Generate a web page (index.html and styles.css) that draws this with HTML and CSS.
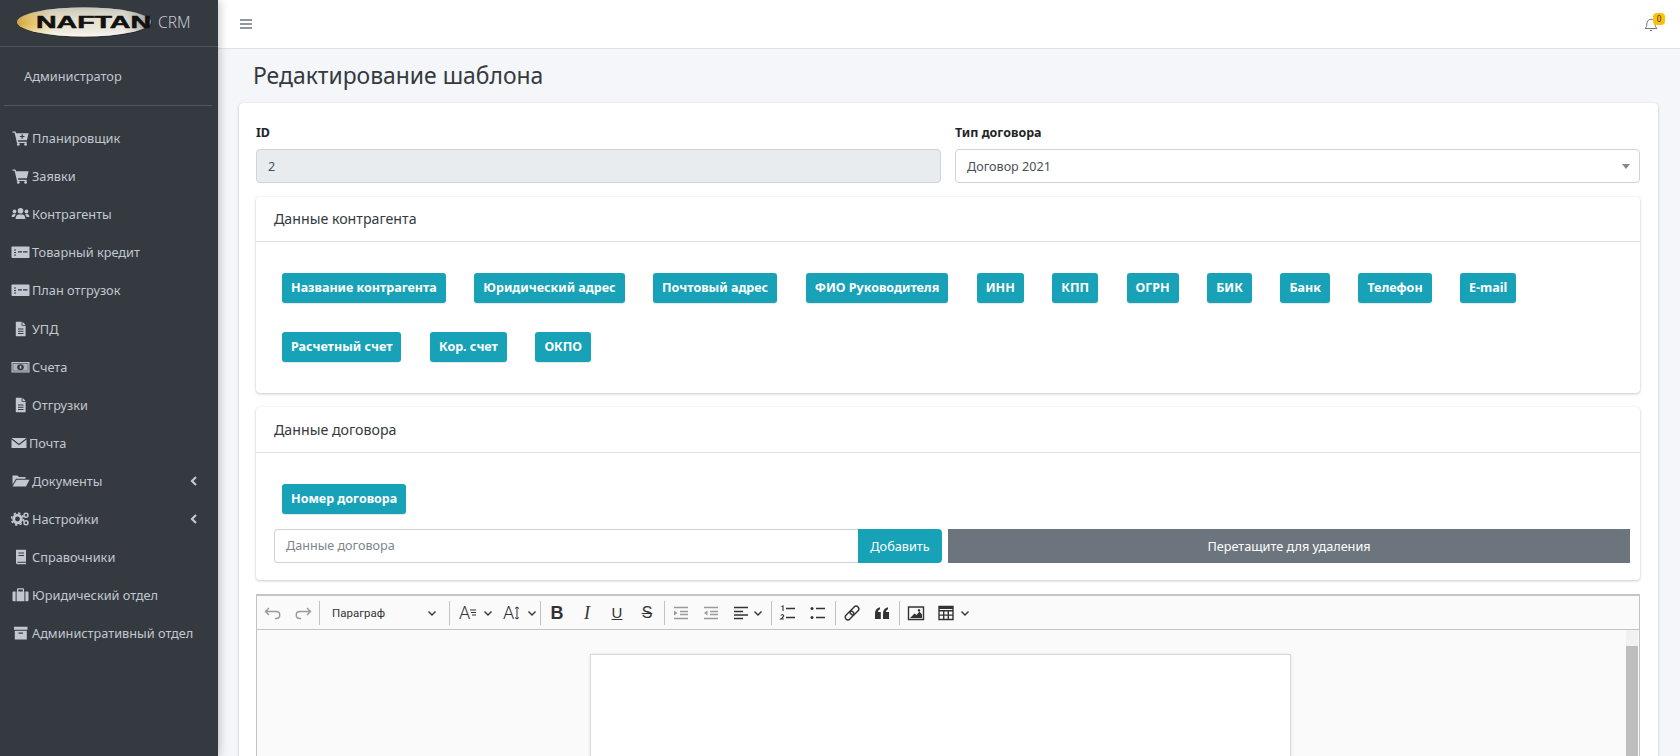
FILE: index.html
```html
<!DOCTYPE html>
<html lang="en">
<head>
    <meta charset="UTF-8">
    <meta name="viewport" content="width=device-width, initial-scale=1.0">
    <title>Редактирование шаблона</title>
    <link rel="stylesheet" href="styles.css">
</head>
<body>
    <svg class="icon-defs" xmlns="http://www.w3.org/2000/svg">
        <symbol id="i-cart" viewBox="0 0 19 16"><path d="M1.500 1.500h3l.6 1.800H17.600l-1.700 7H7l.3 1.400h8.400v1.200H6L3.600 2.800H1.500z"/><circle cx="7.300" cy="14.400" r="1.400"/><circle cx="14.600" cy="14.400" r="1.400"/></symbol>
        <symbol id="i-cart-plus" viewBox="0 0 19 16"><path d="M1.500 1.500h3l.6 1.800H17.600l-1.700 7H7l.3 1.400h8.400v1.200H6L3.600 2.800H1.500z"/><circle cx="7.300" cy="14.400" r="1.400"/><circle cx="14.600" cy="14.400" r="1.400"/><path class="cut" d="M10.600 4.200h1.200v1.700h1.700v1.200h-1.700v1.700h-1.200V7.100H8.900V5.900h1.700z"/></symbol>
        <symbol id="i-users" viewBox="0 0 19 16"><circle cx="3.500" cy="5.500" r="1.900"/><circle cx="15.500" cy="5.500" r="1.900"/><circle cx="9.500" cy="4.800" r="2.800"/><path d="M.6 11c0-2 1-3 2.600-3 .8 0 1.400.3 1.800.7-1 .7-1.500 1.500-1.700 2.300zM18.400 11c0-2-1-3-2.600-3-.8 0-1.400.3-1.800.7 1 .7 1.500 1.500 1.700 2.300zM4.600 13c0-2.800 1.400-4.600 3-4.600h3.800c1.600 0 3 1.800 3 4.600z"/></symbol>
        <symbol id="i-check" viewBox="0 0 19 16"><rect x=".5" y="2.500" width="18" height="11.500" rx=".8"/><path class="cut" d="M3 5.500h2v1H3zM3 8h2v1H3zM3 10.500h2v1H3zM7 7.300h4v1.200H7zM12 7.300h4.500v1.200H12z"/></symbol>
        <symbol id="i-file" viewBox="0 0 19 16"><path d="M4.800 .8h5.800v4h4v10.400H4.800zM11.500 .8l3.100 3.100h-3.100z"/><path class="cut" d="M7 7.500h5.500v1H7zM7 9.800h5.500v1H7zM7 12h5.500v1H7z"/></symbol>
        <symbol id="i-bill" viewBox="0 0 19 16"><rect x=".5" y="3" width="18" height="10.500"/><rect class="cut" x="1.700" y="4.200" width="15.600" height="8.100"/><path d="M2.200 4.700h14.600v7.100H2.200z" opacity=".85"/><ellipse class="cut" cx="9.500" cy="8.200" rx="3.300" ry="3"/><rect x="8.800" y="6.800" width="1.500" height="2.800"/></symbol>
        <symbol id="i-mail" viewBox="0 0 16 16"><path d="M.5 3h15L8 8.800zM.5 4.500v8.500h15V4.500L8 10.300z"/></symbol>
        <symbol id="i-folder" viewBox="0 0 19 16"><path d="M1.500 2.500h5l1.500 1.600h6.500v1.600H5L1.500 11.500zM5.500 6.800h13l-3.500 6.700H1.500z"/></symbol>
        <symbol id="i-cogs" viewBox="0 0 19 16"><circle cx="6.500" cy="8" r="3.800" fill="none" stroke="currentColor" stroke-width="2.800"/><circle cx="6.500" cy="8" r="6" fill="none" stroke="currentColor" stroke-width="1.600" stroke-dasharray="2.300 2.400"/><circle cx="15" cy="4.300" r="2" fill="none" stroke="currentColor" stroke-width="1.500"/><circle cx="15" cy="11.800" r="2" fill="none" stroke="currentColor" stroke-width="1.500"/></symbol>
        <symbol id="i-book" viewBox="0 0 19 16"><path d="M5 .8h10v14.400H6.500C5.500 15.200 5 14.500 5 13.500z"/><path class="cut" d="M7.500 3.500h5.500v1.100H7.500zM7.500 6h5.500v1.100H7.500zM6.500 12.800h8.500v1H6.500z"/></symbol>
        <symbol id="i-case" viewBox="0 0 19 16"><path d="M3 4.500h1.600v9.800H3C2 14.300 1.500 13.800 1.500 13V5.800C1.500 5 2 4.500 3 4.500zM16 4.500h-1.600v9.800H16c1 0 1.500-.5 1.500-1.300V5.800c0-.8-.5-1.300-1.500-1.300zM6 4.500V2.500C6 1.800 6.500 1.300 7.200 1.300h4.600c.7 0 1.200.5 1.200 1.200v2h.4v9.800H5.600V4.500zM7.300 4.500h4.400V2.600H7.300z" fill-rule="evenodd"/></symbol>
        <symbol id="i-archive" viewBox="0 0 19 16"><path d="M3 1.800h13.500v3H3zM3.800 5.800h12v8.800H3.800z"/><rect class="cut" x="7.500" y="7.500" width="4.500" height="1.200"/></symbol>
    </svg>

    <div class="wrapper">
        <aside class="sidebar">
            <div class="brand">
                <svg class="brand-logo" viewBox="0 0 136 32" xmlns="http://www.w3.org/2000/svg">
                    <defs>
                        <linearGradient id="logoFill" x1="0" y1="0" x2="1" y2="0">
                            <stop offset="0" stop-color="#c98f14"/>
                            <stop offset=".1" stop-color="#e6b93e"/>
                            <stop offset=".26" stop-color="#ece6d2"/>
                            <stop offset=".8" stop-color="#e8e8e6"/>
                            <stop offset="1" stop-color="#77777a"/>
                        </linearGradient>
                        <linearGradient id="logoBand" x1="0" y1="0" x2="0" y2="1">
                            <stop offset="0" stop-color="#b9b9b0" stop-opacity=".7"/>
                            <stop offset=".55" stop-color="#e0d8b8" stop-opacity=".25"/>
                            <stop offset="1" stop-color="#fff" stop-opacity=".7"/>
                        </linearGradient>
                    </defs>
                    <ellipse cx="68" cy="17" rx="67" ry="14.500" fill="#24262a" opacity=".5"/>
                    <ellipse cx="67" cy="16" rx="67" ry="14.500" fill="url(#logoFill)"/>
                    <ellipse cx="67" cy="16" rx="67" ry="14.500" fill="url(#logoBand)"/>
                    <text class="logo-text" x="19" y="21.500" textLength="115" lengthAdjust="spacingAndGlyphs">NAFTAN</text>
                </svg>
                <span class="brand-text">CRM</span>
            </div>
            <div class="user-panel">
                <span class="user-name">Администратор</span>
            </div>
            <nav class="nav-list">
                <a class="nav-link"><svg class="nav-icon"><use href="#i-cart-plus"/></svg>Планировщик</a>
                <a class="nav-link"><svg class="nav-icon"><use href="#i-cart"/></svg>Заявки</a>
                <a class="nav-link"><svg class="nav-icon"><use href="#i-users"/></svg>Контрагенты</a>
                <a class="nav-link"><svg class="nav-icon"><use href="#i-check"/></svg>Товарный кредит</a>
                <a class="nav-link"><svg class="nav-icon"><use href="#i-check"/></svg>План отгрузок</a>
                <a class="nav-link"><svg class="nav-icon"><use href="#i-file"/></svg>УПД</a>
                <a class="nav-link"><svg class="nav-icon"><use href="#i-bill"/></svg>Счета</a>
                <a class="nav-link"><svg class="nav-icon"><use href="#i-file"/></svg>Отгрузки</a>
                <a class="nav-link"><svg class="nav-icon nav-icon-small"><use href="#i-mail"/></svg>Почта</a>
                <a class="nav-link"><svg class="nav-icon"><use href="#i-folder"/></svg>Документы<svg class="nav-arrow" viewBox="0 0 8 12"><path d="M6 2 2 6l4 4"/></svg></a>
                <a class="nav-link"><svg class="nav-icon"><use href="#i-cogs"/></svg>Настройки<svg class="nav-arrow" viewBox="0 0 8 12"><path d="M6 2 2 6l4 4"/></svg></a>
                <a class="nav-link"><svg class="nav-icon"><use href="#i-book"/></svg>Справочники</a>
                <a class="nav-link"><svg class="nav-icon"><use href="#i-case"/></svg>Юридический отдел</a>
                <a class="nav-link"><svg class="nav-icon"><use href="#i-archive"/></svg>Административный отдел</a>
            </nav>
        </aside>

        <div class="main">
            <header class="topbar">
                <svg class="burger" viewBox="0 0 14 12"><path d="M1 2h12M1 6h12M1 10h12"/></svg>
                <div class="bell">
                    <svg class="bell-icon" viewBox="0 0 16 16"><path d="M2 12.500c1.300-1 1.800-2.200 1.800-4.500 0-2.600 1.800-4.700 4.200-4.700s4.200 2.100 4.200 4.700c0 2.300.5 3.500 1.800 4.500z"/><path d="M7 14.500h2"/></svg>
                    <span class="badge">0</span>
                </div>
            </header>

            <main class="content">
                <h1 class="page-title">Редактирование шаблона</h1>
                <section class="card">
                    <div class="form-row">
                        <div class="form-group">
                            <label class="form-label">ID</label>
                            <div class="form-control form-control-disabled">2</div>
                        </div>
                        <div class="form-group">
                            <label class="form-label">Тип договора</label>
                            <div class="form-control form-select">Договор 2021<span class="select-caret"></span></div>
                        </div>
                    </div>

                    <div class="panel">
                        <div class="panel-header">Данные контрагента</div>
                        <div class="panel-body tags">
                            <span class="tag">Название контрагента</span>
                            <span class="tag">Юридический адрес</span>
                            <span class="tag">Почтовый адрес</span>
                            <span class="tag">ФИО Руководителя</span>
                            <span class="tag">ИНН</span>
                            <span class="tag">КПП</span>
                            <span class="tag">ОГРН</span>
                            <span class="tag">БИК</span>
                            <span class="tag">Банк</span>
                            <span class="tag">Телефон</span>
                            <span class="tag">E-mail</span>
                            <span class="tag">Расчетный счет</span>
                            <span class="tag">Кор. счет</span>
                            <span class="tag">ОКПО</span>
                        </div>
                    </div>

                    <div class="panel">
                        <div class="panel-header panel-header-tall">Данные договора</div>
                        <div class="panel-body">
                            <div class="tags">
                                <span class="tag">Номер договора</span>
                            </div>
                            <div class="add-row">
                                <div class="input-group">
                                    <div class="add-input">Данные договора</div>
                                    <button class="btn-add" type="button">Добавить</button>
                                </div>
                                <button class="btn-drop" type="button">Перетащите для удаления</button>
                            </div>
                        </div>
                    </div>

                    <div class="editor">
                        <div class="toolbar">
                            <span class="tool tool-off"><svg viewBox="0 0 20 20"><path d="M6 5 2.500 8.500 6 12M3 8.500h10c5 0 5 7 0 7h-1"/></svg></span>
                            <span class="tool tool-off"><svg viewBox="0 0 20 20"><path d="M14 5l3.500 3.500L14 12M17 8.500H7c-5 0-5 7 0 7h1"/></svg></span>
                            <span class="tool-sep"></span>
                            <span class="tool-heading">Параграф<svg class="chevron" viewBox="0 0 10 10"><path d="M1.500 3.500 5 7l3.500-3.500"/></svg></span>
                            <span class="tool-sep"></span>
                            <span class="tool tool-drop tool-font">
                                <span class="font-glyph">A<svg class="font-lines" viewBox="0 0 6 8"><path d="M0 1h6M1 3.500h5M2 6h4"/></svg></span>
                                <svg class="chevron" viewBox="0 0 10 10"><path d="M1.500 3.500 5 7l3.500-3.500"/></svg>
                            </span>
                            <span class="tool tool-drop tool-font">
                                <span class="font-glyph">A<svg class="font-lines" viewBox="0 0 6 14"><path d="M3 1v12M1 2.500 3 1l2 1.500M1 11.500 3 13l2-1.500"/></svg></span>
                                <svg class="chevron" viewBox="0 0 10 10"><path d="M1.500 3.500 5 7l3.500-3.500"/></svg>
                            </span>
                            <span class="tool-sep"></span>
                            <span class="tool"><span class="glyph-b">B</span></span>
                            <span class="tool"><span class="glyph-i">I</span></span>
                            <span class="tool"><span class="glyph-u">U</span></span>
                            <span class="tool"><span class="glyph-s">S</span></span>
                            <span class="tool-sep tool-sep-wide"></span>
                            <span class="tool tool-off"><svg viewBox="0 0 20 20"><path d="M3 4.500h14M9 8.500h8M9 11.500h8M3 15.500h14"/><path class="solid" d="M3 7.500 6.500 10 3 12.500z"/></svg></span>
                            <span class="tool tool-off"><svg viewBox="0 0 20 20"><path d="M3 4.500h14M9 8.500h8M9 11.500h8M3 15.500h14"/><path class="solid" d="M6.500 7.500 3 10l3.500 2.500z"/></svg></span>
                            <span class="tool tool-drop tool-align">
                                <svg viewBox="0 0 20 20"><path d="M3 4.500h14M3 8.500h9M3 12h14M3 15.500h9"/></svg>
                                <svg class="chevron" viewBox="0 0 10 10"><path d="M1.500 3.500 5 7l3.500-3.500"/></svg>
                            </span>
                            <span class="tool-sep"></span>
                            <span class="tool"><svg viewBox="0 0 20 20"><path d="M8 5.500h9M8 14.500h9"/><path class="thin" d="M3.500 3.500 5 3v5M2.800 12.500c1-1.400 3.400-.8 2.800.8-.3.800-1.700 1.600-2.800 2.700h3"/></svg></span>
                            <span class="tool"><svg viewBox="0 0 20 20"><path d="M8 5.500h9M8 14.500h9"/><circle class="solid" cx="4" cy="5.500" r="1.500"/><circle class="solid" cx="4" cy="14.500" r="1.500"/></svg></span>
                            <span class="tool-sep tool-sep-wide"></span>
                            <span class="tool"><svg viewBox="0 0 20 20"><rect x="9.750" y="2.500" width="5.500" height="10" rx="2.750" transform="rotate(45 12.500 7.500)"/><rect x="4.750" y="7.500" width="5.500" height="10" rx="2.750" transform="rotate(45 7.500 12.500)"/></svg></span>
                            <span class="tool"><svg viewBox="0 0 20 20"><path class="solid" d="M3 16V10.500C3 7 5 4.800 8 4.300v2C6.800 6.700 6.200 7.600 6 9h2.800v7zM11 16V10.500c0-3.500 2-5.700 5-6.200v2c-1.200.4-1.800 1.300-2 2.700h3v7z"/></svg></span>
                            <span class="tool-sep tool-sep-wide"></span>
                            <span class="tool"><svg viewBox="0 0 20 20"><path d="M2.500 4h15v12.500h-15z"/><path class="solid" d="M4 15h12v-3.500l-2.500-3-3 3.500-2-1.500zM13 6a1.300 1.300 0 1 0 .01 0z"/></svg></span>
                            <span class="tool tool-drop tool-table">
                                <svg viewBox="0 0 20 20"><path d="M3 3.500h14v13H3zM3 7.800h14M3 12.100h14M7.700 7.800v8.700M12.300 7.800v8.700"/><path class="solid" d="M3 3.500h14v2.500H3z"/></svg>
                                <svg class="chevron" viewBox="0 0 10 10"><path d="M1.500 3.500 5 7l3.500-3.500"/></svg>
                            </span>
                        </div>
                        <div class="editor-area">
                            <div class="editor-page"></div>
                            <div class="scrollbar">
                                <span class="scroll-up"></span>
                                <span class="scroll-thumb"></span>
                            </div>
                        </div>
                    </div>
                </section>
            </main>
        </div>
    </div>
</body>
</html>
```

FILE: styles.css
```css
* {
    box-sizing: border-box;
}
html,
body {
    height: 100%;
    margin: 0;
    overflow: hidden;
}
body {
    font-family: "Noto Sans", "Open Sans", sans-serif;
    font-size: 12.6px;
    color: #212529;
    background-color: #f4f6f9;
}
.icon-defs {
    display: none;
}
.cut {
    fill: #343a40;
}
.wrapper {
    display: flex;
    height: 100%;
}

/* sidebar */
.sidebar {
    width: 218px;
    flex-shrink: 0;
    background-color: #343a40;
    color: #c2c7d0;
    box-shadow: 0 0 10px rgba(0, 0, 0, .3);
    z-index: 2;
}
.brand {
    display: flex;
    align-items: center;
    height: 47px;
    padding: 0 0 2px 17px;
    border-bottom: 1px solid #4b545c;
}
.brand-logo {
    width: 136px;
    height: 32px;
}
.logo-text {
    font-family: "Liberation Sans", sans-serif;
    font-size: 16px;
    font-weight: 700;
    fill: #111;
    stroke: #111;
    stroke-width: .5;
}
.brand-text {
    margin-left: 5px;
    font-size: 15.500px;
    font-weight: 300;
}
.user-panel {
    display: flex;
    align-items: center;
    height: 59px;
    margin: 0 6px 0 4px;
    padding-left: 20px;
    border-bottom: 1px solid #4f5962;
}
.user-name {
    font-size: 12.800px;
}
.nav-list {
    display: flex;
    flex-direction: column;
    padding-top: 13px;
}
.nav-link {
    display: flex;
    align-items: center;
    height: 38.100px;
    padding: 0 20px 0 11px;
    font-size: 12.750px;
}
.nav-icon {
    width: 19px;
    height: 16px;
    margin-right: 2px;
    fill: #c2c7d0;
    color: #c2c7d0;
    flex-shrink: 0;
}
.nav-icon-small {
    width: 16px;
}
.nav-arrow {
    width: 8px;
    height: 12px;
    margin-left: auto;
    fill: none;
    stroke: #c2c7d0;
    stroke-width: 2.200;
}

/* top bar */
.main {
    flex: 1;
    min-width: 0;
}
.topbar {
    display: flex;
    align-items: center;
    justify-content: space-between;
    height: 49px;
    padding: 0 21px 0 21px;
    background-color: #fff;
    border-bottom: 1px solid #dee2e6;
}
.burger {
    width: 14px;
    height: 12px;
    fill: none;
    stroke: #6c757d;
    stroke-width: 1.700;
}
.bell {
    position: relative;
    display: flex;
}
.bell-icon {
    width: 16px;
    height: 16px;
    fill: none;
    stroke: #6c757d;
    stroke-width: 1;
}
.badge {
    position: absolute;
    top: -3px;
    right: -6px;
    width: 12px;
    height: 12px;
    border-radius: 4px;
    background-color: #ffc107;
    color: #1f2d3d;
    font-size: 8px;
    line-height: 12px;
    text-align: center;
}

/* content */
.content {
    padding: 0 22px 0 21px;
}
.page-title {
    margin: 0;
    padding: 12px 0 0 14px;
    height: 54px;
    color: #343a40;
    font-size: 22.900px;
    line-height: 30px;
    font-weight: 400;
}
.card {
    padding: 17px 18px 0 17px;
    height: 700px;
    background-color: #fff;
    border-radius: 4px;
    box-shadow: 0 0 1px rgba(0, 0, 0, .13), 0 1px 3px rgba(0, 0, 0, .2);
}
.form-row {
    display: grid;
    grid-template-columns: 685px 685px;
    column-gap: 14px;
}
.form-label {
    display: block;
    height: 29px;
    font-size: 12.500px;
    font-weight: 700;
    line-height: 26px;
}
.form-control {
    position: relative;
    height: 34px;
    padding: 0 11px;
    border: 1px solid #ced4da;
    border-radius: 4px;
    line-height: 34px;
    color: #495057;
}
.form-control-disabled {
    background-color: #e9ecef;
}
.select-caret {
    position: absolute;
    right: 9px;
    top: 14px;
    border-top: 5px solid #888;
    border-left: 4px solid transparent;
    border-right: 4px solid transparent;
}
.panel {
    margin-top: 14px;
    background-color: #fff;
    border-radius: 4px;
    box-shadow: 0 0 1px rgba(0, 0, 0, .13), 0 1px 3px rgba(0, 0, 0, .2);
}
.panel-header {
    height: 45px;
    padding: 0 18px;
    border-bottom: 1px solid rgba(0, 0, 0, .125);
    color: #343a40;
    font-size: 14.200px;
    line-height: 44px;
}
.panel-header-tall {
    height: 46px;
    line-height: 46px;
}
.panel-body {
    padding: 16px 10px 17px 12px;
}
.tags {
    display: flex;
    flex-wrap: wrap;
}
.tag {
    margin: 15px 14.500px 14px 14px;
    padding: 0 9px;
    height: 30px;
    border-radius: 3px;
    background-color: #17a2b8;
    color: #fff;
    font-size: 12.500px;
    font-weight: 700;
    line-height: 30px;
    box-shadow: 0 1px 1px rgba(0, 0, 0, .1);
}
.add-row {
    display: flex;
    gap: 6px;
    margin: 1px 0 0 6px;
}
.input-group {
    display: flex;
    flex: 0 0 668px;
}
.add-input {
    flex: 1;
    height: 34px;
    padding: 0 11px;
    border: 1px solid #ced4da;
    border-right: 0;
    border-radius: 4px 0 0 4px;
    color: #7d858c;
    line-height: 32px;
}
.btn-add,
.btn-drop {
    height: 34px;
    border: 0;
    color: #fff;
    font-family: inherit;
    font-size: 12.700px;
}
.btn-add {
    width: 84px;
    background-color: #17a2b8;
    border-radius: 0 4px 4px 0;
}
.btn-drop {
    flex: 0 0 682px;
    background-color: #6c757d;
}

/* editor */
.editor {
    margin-top: 14px;
    border: 1px solid #c4c4c4;
    border-top: 2px solid #c4c4c4;
}
.toolbar {
    display: flex;
    align-items: center;
    height: 34px;
    padding-left: 1px;
    background-color: #fafafa;
    border-bottom: 1px solid #c4c4c4;
}
.tool {
    display: flex;
    align-items: center;
    justify-content: center;
    width: 30px;
    height: 100%;
    color: #333;
    flex-shrink: 0;
}
.tool svg {
    width: 20px;
    height: 20px;
    fill: none;
    stroke: #333;
    stroke-width: 1.400;
}
.tool .solid {
    fill: #333;
    stroke: none;
}
.tool .thin {
    stroke-width: 1.100;
}
.tool-off svg {
    stroke: #9a9a9a;
}
.tool-off .solid {
    fill: #9a9a9a;
}
.tool-sep {
    width: 1px;
    height: 24px;
    margin: 0 1px;
    background-color: #c4c4c4;
    flex-shrink: 0;
}
.tool-sep-wide {
    margin-left: 2px;
}
.tool-heading {
    display: flex;
    align-items: center;
    justify-content: space-between;
    width: 127px;
    padding: 0 11px;
    font-family: Roboto, sans-serif;
    font-size: 11.500px;
    color: #333;
    flex-shrink: 0;
}
.tool .chevron,
.chevron {
    width: 10px;
    height: 10px;
    fill: none;
    stroke: #333;
    stroke-width: 1.400;
}
.tool-drop {
    justify-content: flex-start;
}
.tool-font {
    width: 44px;
    padding-left: 8px;
    gap: 2px;
}
.tool-align {
    width: 44px;
    padding-left: 5px;
    gap: 2px;
}
.tool-table {
    width: 46px;
    padding-left: 5px;
    gap: 4px;
}
.font-glyph {
    display: flex;
    align-items: center;
    width: 22px;
    font-family: Roboto, sans-serif;
    font-size: 18px;
    font-weight: 300;
    line-height: 20px;
}
.tool .font-lines {
    width: 6px;
    height: 14px;
    stroke-width: 1;
}
.glyph-b,
.glyph-i,
.glyph-u,
.glyph-s {
    font-family: "Liberation Sans", sans-serif;
    line-height: 18px;
}
.glyph-b {
    font-weight: 700;
    font-size: 18px;
}
.glyph-i {
    font-family: "Liberation Serif", serif;
    font-style: italic;
    font-size: 18px;
}
.glyph-u {
    text-decoration: underline;
    font-size: 15px;
}
.glyph-s {
    text-decoration: line-through;
    font-size: 16px;
}
.editor-area {
    display: flex;
    justify-content: center;
    position: relative;
    height: 300px;
    padding-top: 24px;
    background-color: #fafafa;
}
.editor-page {
    width: 701px;
    margin-right: 15px;
    background-color: #fff;
    border: 1px solid #d9d9d9;
    box-shadow: 0 0 4px rgba(0, 0, 0, .08);
}
.scrollbar {
    position: absolute;
    top: 0;
    right: 0;
    bottom: 0;
    display: flex;
    flex-direction: column;
    width: 14px;
    padding: 0 1px;
}
.scroll-up {
    height: 16px;
    background-color: #f1f1f1;
    flex-shrink: 0;
}
.scroll-thumb {
    flex: 1;
    background-color: #bebebe;
}
```
